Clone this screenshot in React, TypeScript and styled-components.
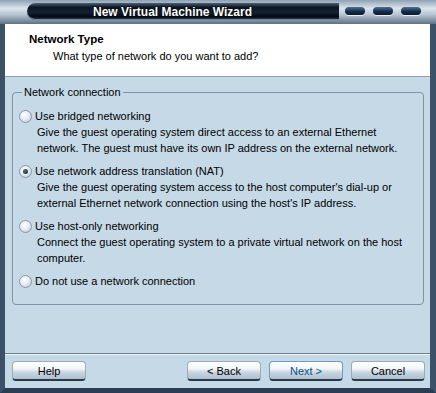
import React from 'react';
import styled, { createGlobalStyle } from 'styled-components';

const Global = createGlobalStyle`
	html, body {
		margin: 0;
		padding: 0;
		background: #6f8294;
	}
	body {
		font-family: Tahoma, "Liberation Sans", Arial, sans-serif;
		font-size: 11px;
		color: #000;
	}
`

const Window = styled.div`
	width: 436px;
	height: 393px;
	display: flex;
	flex-direction: column;
	overflow: hidden;
`

const TitleBar = styled.div`
	height: 24px;
	display: flex;
	align-items: stretch;
	background: linear-gradient(#8ea2b4 0%, #dbe4ec 35%, #b8c6d3 60%, #5d7185 100%);
`

const TitleCapLeft = styled.div`
	width: 27px;
`

const TitleStrip = styled.div`
	flex: 1;
	margin: 3px 0 4px;
	padding-left: 66px;
	display: flex;
	align-items: center;
	border-radius: 9px 0 0 9px;
	background: linear-gradient(#4c6076 0%, #0c1622 25%, #142234 55%, #050a10 80%, #2d4258 100%);
	box-shadow: inset 0 -1px 0 #6f8aa4;
	color: #fff;
	font-family: "Liberation Sans", Arial, sans-serif;
	font-weight: bold;
	font-size: 12px;
	text-shadow: 0 0 2px #000, 0 0 1px #000;
`

const TitleButtons = styled.div`
	width: 91px;
	display: flex;
	gap: 8px;
	padding: 7px 0 0 6px;
`

const Pill = styled.div`
	width: 20px;
	height: 8px;
	border-radius: 4px;
	background: linear-gradient(#4f7092, #162e49 55%, #0a1a2c);
	box-shadow: 0 1px 0 #e8eef4;
`

const Frame = styled.div`
	flex: 1;
	display: flex;
	flex-direction: column;
	border-left: 5px solid #3b5168;
	border-right: 6px solid #3b5168;
	border-bottom: 5px solid #2a3d52;
	box-shadow: inset 1px 0 0 #9fb3c6, inset -1px -1px 0 #eef3f7;
`

const Header = styled.div`
	height: 53px;
	background: #fff;
	border-bottom: 1px solid #8fa1b2;
	padding: 8px 0 0 24px;
	box-sizing: border-box;
`

const HeaderTitle = styled.div`
	font-weight: bold;
	font-size: 11.5px;
	line-height: 14px;
`

const HeaderSub = styled.div`
	margin: 3px 0 0 24px;
	line-height: 14px;
`

const Body = styled.div`
	flex: 1;
	display: flex;
	flex-direction: column;
	background: #c6d9e7;
`

const Group = styled.fieldset`
	margin: 8px 6px 0 7px;
	padding: 2px 6px 16px 6px;
	border: 1px solid #8093a4;
	border-radius: 4px;
`

const Legend = styled.legend`
	padding: 0 2px;
	margin-left: 3px;
	line-height: 14px;
`

const Option = styled.div<{ first?: boolean }>`
	margin-top: ${p => p.first ? '8px' : '9px'};
`

const OptionLabel = styled.label`
	display: flex;
	align-items: center;
	gap: 3px;
	line-height: 14px;
`

const Radio = styled.span<{ checked?: boolean }>`
	width: 11px;
	height: 11px;
	border-radius: 50%;
	border: 1px solid #8797a6;
	background: radial-gradient(circle at 40% 35%, #ffffff 0%, #e6edf3 45%, #b4c3d0 100%);
	display: flex;
	align-items: center;
	justify-content: center;
	&::after {
		content: '';
		display: ${p => p.checked ? 'block' : 'none'};
		width: 5px;
		height: 5px;
		border-radius: 50%;
		background: radial-gradient(circle at 40% 35%, #5a6e82, #121c28);
	}
`

const Desc = styled.div`
	margin: 2px 0 0 18px;
	line-height: 14px;
`

const Footer = styled.div`
	margin-top: auto;
	height: 34px;
	border-top: 1px solid #6c7f90;
	box-shadow: inset 0 1px 0 #eef4f8;
	display: flex;
	align-items: center;
	padding: 0 5px 0 7px;
	gap: 8px;
`

const Button = styled.button<{ primary?: boolean }>`
	width: 74px;
	height: 20px;
	padding: 0;
	font: inherit;
	font-family: "Liberation Sans", Arial, sans-serif;
	font-size: 11px;
	color: ${p => p.primary ? '#0d4f8a' : '#000'};
	border: 1px solid ${p => p.primary ? '#6f9bc0' : '#9aabb9'};
	border-bottom: 2px solid #2b3a48;
	border-radius: 4px;
	background: linear-gradient(#ffffff 0%, #f2f6f9 40%, #c8d6e2 60%, #aebfce 100%);
	&:nth-child(2) {
		margin-left: auto;
	}
`

const options = [
	{
		label: 'Use bridged networking',
		desc: ['Give the guest operating system direct access to an external Ethernet', 'network. The guest must have its own IP address on the external network.'],
	},
	{
		label: 'Use network address translation (NAT)',
		desc: ["Give the guest operating system access to the host computer's dial-up or", "external Ethernet network connection using the host's IP address."],
		checked: true,
	},
	{
		label: 'Use host-only networking',
		desc: ['Connect the guest operating system to a private virtual network on the host', 'computer.'],
	},
	{
		label: 'Do not use a network connection',
		desc: [],
	},
];

function App() {
	return (
		<Window>
			<Global />
			<TitleBar>
				<TitleCapLeft />
				<TitleStrip>New Virtual Machine Wizard</TitleStrip>
				<TitleButtons>
					<Pill />
					<Pill />
					<Pill />
				</TitleButtons>
			</TitleBar>
			<Frame>
				<Header>
					<HeaderTitle>Network Type</HeaderTitle>
					<HeaderSub>What type of network do you want to add?</HeaderSub>
				</Header>
				<Body>
					<Group>
						<Legend>Network connection</Legend>
						{options.map((o, i) => (
							<Option key={o.label} first={i === 0}>
								<OptionLabel>
									<Radio checked={o.checked} />
									{o.label}
								</OptionLabel>
								{o.desc.map(d => <Desc key={d}>{d}</Desc>)}
							</Option>
						))}
					</Group>
					<Footer>
						<Button>Help</Button>
						<Button>&lt; Back</Button>
						<Button primary>Next &gt;</Button>
						<Button>Cancel</Button>
					</Footer>
				</Body>
			</Frame>
		</Window>
	);
}

export default App;
